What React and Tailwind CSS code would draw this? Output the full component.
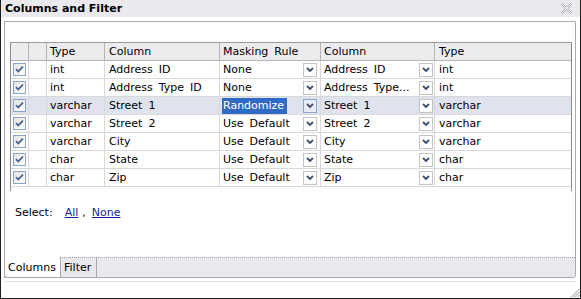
import React from "react";

const rows = [
  { type: "int", col: "Address ID", rule: "None", col2: "Address ID", type2: "int" },
  { type: "int", col: "Address Type ID", rule: "None", col2: "Address Type...", type2: "int" },
  { type: "varchar", col: "Street 1", rule: "Randomize", col2: "Street 1", type2: "varchar", sel: true },
  { type: "varchar", col: "Street 2", rule: "Use Default", col2: "Street 2", type2: "varchar" },
  { type: "varchar", col: "City", rule: "Use Default", col2: "City", type2: "varchar" },
  { type: "char", col: "State", rule: "Use Default", col2: "State", type2: "char" },
  { type: "char", col: "Zip", rule: "Use Default", col2: "Zip", type2: "char" },
];

function CheckBox() {
  return (
    <svg width="13" height="13" viewBox="0 0 13 13">
      <defs>
        <linearGradient id="cbg" x1="0" y1="0" x2="1" y2="1">
          <stop offset="0" stopColor="#e4e4e0" />
          <stop offset="1" stopColor="#ffffff" />
        </linearGradient>
      </defs>
      <rect x="0.5" y="0.5" width="12" height="12" fill="url(#cbg)" stroke="#8fa3c4" />
      <path d="M3 6.2 L5.2 8.5 L10 3.6" fill="none" stroke="#4b6491" strokeWidth="1.8" />
    </svg>
  );
}

function DropBtn({ active }) {
  return (
    <div
      className={
        "w-[14px] h-[14px] flex items-center justify-center border " +
        (active ? "border-[#8ba4c9] bg-[#e6ecf6]" : "border-[#c4c4c4] bg-white")
      }
    >
      <svg width="8" height="6" viewBox="0 0 8 6">
        <path d="M1 1 L4 4 L7 1" fill="none" stroke="#3f4d6b" strokeWidth="1.8" />
      </svg>
    </div>
  );
}

export default function App() {
  return (
    <div className="relative w-[581px] h-[299px] bg-white border-x border-b border-[#1e1e1e] flex flex-col font-['DejaVu_Sans',sans-serif] text-[11px] text-black leading-none overflow-hidden">
      <div className="h-[17px] shrink-0 bg-[#e9e9ee] flex items-center justify-between pl-[4px] pr-[8px]">
        <span className="font-bold">Columns and Filter</span>
        <svg width="11" height="11" viewBox="0 0 11 11" className="mt-[-1px]">
          <polygon
            points="0.5,1.5 1.5,0.5 5.5,4.3 9.5,0.5 10.5,1.5 6.7,5.5 10.5,9.5 9.5,10.5 5.5,6.7 1.5,10.5 0.5,9.5 4.3,5.5"
            fill="#fff"
            stroke="#9a9a9a"
            strokeWidth="0.9"
          />
        </svg>
      </div>
      <div className="flex-1 pl-[3px] pr-[4px] pt-[4px] flex flex-col">
        <div className="h-[257px] shrink-0 border border-[#a9a9a9] rounded-br-[3px] flex flex-col">
          <div className="flex-1 pl-[5px] pr-[3px] pt-[20px] flex flex-col">
            <div className="h-[149px] border-l border-t border-r border-l-[#8e8e8e] border-t-[#9a9a9a] border-r-[#8a8a8a] flex flex-col [word-spacing:2.5px]">
              <div className="h-[18px] flex bg-[#ececee] border-b border-[#b4b4b4]">
                <div className="w-[18px] border-r border-[#b4b4b4]" />
                <div className="w-[18px] border-r border-[#b4b4b4]" />
                <div className="w-[58px] border-r border-[#b4b4b4] pl-[3px] flex items-center">Type</div>
                <div className="w-[115px] border-r border-[#b4b4b4] pl-[4px] flex items-center">Column</div>
                <div className="w-[101px] border-r border-[#b4b4b4] pl-[3px] flex items-center">Masking Rule</div>
                <div className="w-[114px] border-r border-[#b4b4b4] pl-[3px] flex items-center">Column</div>
                <div className="flex-1 pl-[4px] flex items-center">Type</div>
              </div>
              {rows.map((r, i) => (
                <div
                  key={i}
                  className={"h-[18px] flex border-b border-[#d8d8d8] " + (r.sel ? "bg-[#dfe3ed]" : "bg-white")}
                >
                  <div className="w-[18px] border-r border-[#d8d8d8] flex items-center justify-center">
                    <CheckBox />
                  </div>
                  <div className="w-[18px] border-r border-[#d8d8d8]" />
                  <div className="w-[58px] border-r border-[#d8d8d8] pl-[3px] flex items-center">{r.type}</div>
                  <div className="w-[115px] border-r border-[#d8d8d8] pl-[4px] flex items-center">{r.col}</div>
                  <div className="w-[101px] border-r border-[#d8d8d8] pl-[3px] pr-[3px] flex items-center justify-between">
                    {r.sel ? (
                      <span className="ml-[-1px] pl-[1px] pr-[3px] h-[16px] flex items-center bg-[#316ac5] text-white">
                        {r.rule}
                      </span>
                    ) : (
                      <span>{r.rule}</span>
                    )}
                    <DropBtn active={r.sel} />
                  </div>
                  <div className="w-[114px] border-r border-[#d8d8d8] pl-[3px] pr-[1px] flex items-center justify-between">
                    <span>{r.col2}</span>
                    <DropBtn />
                  </div>
                  <div className="flex-1 pl-[4px] flex items-center">{r.type2}</div>
                </div>
              ))}
            </div>
            <div className="mt-[14px] h-[14px] pl-[5px] flex items-center">
              <span>Select:</span>
              <span className="ml-[12px] text-[#1a1f9c] underline">All</span>
              <span className="ml-[4px]">,</span>
              <span className="ml-[6px] text-[#1a1f9c] underline">None</span>
            </div>
          </div>
          <div className="h-[20px] shrink-0 flex bg-[#e8e8ed] border-t border-dotted border-[#a0a0a0] rounded-br-[3px]">
            <div className="w-[56px] ml-[-1px] mt-[-1px] h-[21px] bg-white border-l border-b border-[#a9a9a9] rounded-bl-[3px] pl-[3px] flex items-center">
              Columns
            </div>
            <div className="w-[37px] border-l border-r border-[#a9a9a9] pl-[3px] flex items-center">Filter</div>
          </div>
        </div>
        <div className="mt-[3px] border-t border-[#e4e4e4]" />
      </div>
      <svg width="10" height="10" viewBox="0 0 10 10" className="absolute right-0 bottom-0">
        <path d="M9.5 1 L1 9.5 M9.5 4 L4 9.5 M9.5 7 L7 9.5" stroke="#8a8a8a" strokeWidth="1" />
      </svg>
    </div>
  );
}
